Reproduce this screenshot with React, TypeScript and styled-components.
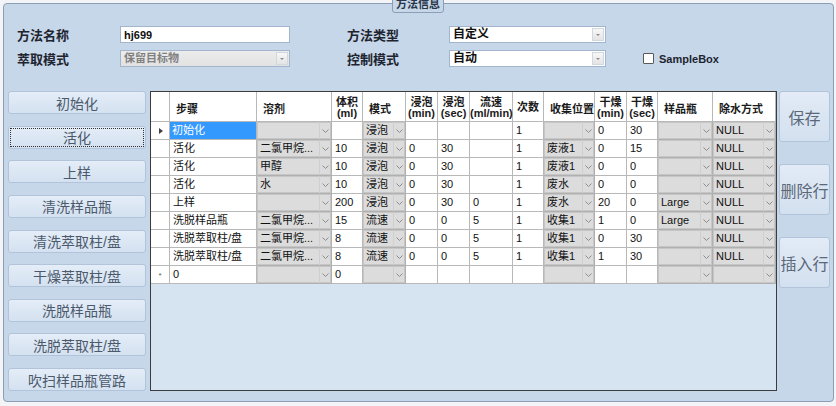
import React from 'react';
import styled, { createGlobalStyle } from 'styled-components';

const GlobalStyle = createGlobalStyle`
	body {
		margin: 0;
		background: #f2f4f7;
		font-family: 'Liberation Sans', 'Noto Sans CJK SC', sans-serif;
	}
`;

const FONT = `'Liberation Sans', 'Noto Sans CJK SC', sans-serif`;

const Page = styled.div`
	width: 836px;
	height: 406px;
	box-sizing: border-box;
	padding: 3px 2px 4px 3px;
	overflow: hidden;
`;

const Panel = styled.div`
	position: relative;
	height: 100%;
	box-sizing: border-box;
	border: 1px solid #8c9db4;
	border-radius: 4px;
	background: #c6d7e9;
	display: flex;
	flex-direction: column;
`;

const Legend = styled.div`
	position: absolute;
	top: -11px;
	left: 388px;
	width: 52px;
	height: 20px;
	box-sizing: border-box;
	border: 1px solid #8c9db4;
	border-radius: 3px;
	background: #c6d7e9;
	font: bold 11px ${FONT};
	color: #2a3548;
	text-align: center;
	line-height: 20px;
`;

const Form = styled.div`
	display: grid;
	grid-template-columns: 103px 170px 57px 102px 157px 37px auto;
	grid-template-rows: 17px 17px;
	row-gap: 7px;
	align-items: center;
	padding: 22px 0 0 13px;
`;

const Label = styled.div`
	font: bold 13px ${FONT};
	color: #1e2530;
`;

const TextInput = styled.input`
	width: 170px;
	height: 17px;
	box-sizing: border-box;
	border: 1px solid #a3b5cc;
	padding: 0 3px;
	font: bold 11px ${FONT};
	color: #101010;
	background: #fff;
	outline: none;
`;

const SelectBox = styled.div<{ $disabled?: boolean }>`
	display: flex;
	align-items: stretch;
	height: 17px;
	box-sizing: border-box;
	border: 1px solid #a3b5cc;
	background: ${(p) => (p.$disabled ? 'linear-gradient(#ececec, #e2e2e2)' : '#fff')};
	font: bold ${(p) => (p.$disabled ? '11px' : '12px')} ${FONT};
	color: ${(p) => (p.$disabled ? '#808080' : '#101010')};
`;

const SelectValue = styled.span`
	flex: 1;
	padding: 0 3px;
	line-height: 15px;
	white-space: nowrap;
`;

const DropBtn = styled.span`
	width: 10px;
	margin: 1px;
	border: 1px solid #d2d8e0;
	background: linear-gradient(#f7f7f7, #e4e4e4);
	display: flex;
	align-items: center;
	justify-content: center;
	&::after {
		content: '';
		border-left: 2px solid transparent;
		border-right: 2px solid transparent;
		border-top: 2px solid #8a8a8a;
	}
`;

const CheckRow = styled.label`
	display: flex;
	align-items: center;
	gap: 5px;
	font: bold 11px ${FONT};
	color: #1e2530;
`;

const CheckBox = styled.span`
	width: 11px;
	height: 11px;
	box-sizing: border-box;
	border: 1px solid #5a5a5a;
	border-radius: 1px;
	background: #fff;
`;

const Body = styled.div`
	display: flex;
	gap: 4px;
	margin-top: 24px;
	padding-left: 4px;
`;

const StepColumn = styled.div`
	width: 138px;
	height: 300px;
	display: flex;
	flex-direction: column;
	justify-content: space-between;
`;

const StepButton = styled.button<{ $focused?: boolean }>`
	height: 23px;
	box-sizing: border-box;
	border: 1px solid #b2c4d9;
	border-radius: 3px;
	background: linear-gradient(#e4edf8, #d4e1f0);
	font: 14px ${FONT};
	color: #4b596b;
	padding: 0;
	position: relative;
	&::after {
		content: '';
		display: ${(p) => (p.$focused ? 'block' : 'none')};
		position: absolute;
		inset: 1px;
		border: 1px dotted #303030;
	}
`;

const GridFrame = styled.div`
	width: 627px;
	height: 300px;
	box-sizing: border-box;
	border: 1px solid #3c3c3c;
	background: #d6e4f1;
	overflow: hidden;
`;

const Grid = styled.table`
	border-collapse: collapse;
	table-layout: fixed;
	width: 625px;
	font: 11px ${FONT};
	color: #111;
	margin: -1px 0 0 -1px;
`;

const HeadCell = styled.th<{ $center?: boolean }>`
	height: 30px;
	padding: ${(p) => (p.$center ? '2px 0 0 0' : '5px 0 0 6px')};
	box-sizing: border-box;
	background: #fff;
	border: 1px solid #b8b8b8;
	font: bold 11px ${FONT};
	line-height: 11px;
	text-align: ${(p) => (p.$center ? 'center' : 'left')};
	vertical-align: middle;
	color: #1a1a1a;
	white-space: pre-line;
`;

const RowHead = styled.td`
	height: 17px;
	padding: 0;
	background: #fff;
	border: 1px solid #b8b8b8;
	text-align: center;
	font-size: 9px;
	color: #505050;
`;

const Marker = styled.span<{ $kind: 'current' | 'new' }>`
	display: inline-block;
	${(p) =>
		p.$kind === 'current'
			? `width: 0; height: 0; border-top: 3px solid transparent; border-bottom: 3px solid transparent; border-left: 4px solid #404040; margin-left: 2px;`
			: `font-size: 8px; color: #606060;`}
`;

const Cell = styled.td<{ $selected?: boolean }>`
	height: 17px;
	padding: 0 0 0 ${(p) => (p.$selected ? '2px' : '3px')};
	border: 1px solid #b8b8b8;
	background: ${(p) => (p.$selected ? '#3399ff' : '#fff')};
	color: ${(p) => (p.$selected ? '#fff' : '#111')};
	white-space: nowrap;
	overflow: hidden;
	line-height: 17px;
`;

const ComboTd = styled.td`
	height: 17px;
	padding: 0;
	border: 1px solid #b0b0b0;
	background: #dcdcdc;
	box-shadow: inset 0 0 0 1px #c6c6c6;
`;

const ComboInner = styled.div`
	display: flex;
	height: 17px;
	align-items: stretch;
`;

const ComboText = styled.span`
	flex: 1;
	padding-left: 3px;
	line-height: 17px;
	white-space: nowrap;
	overflow: hidden;
`;

const ComboArrow = styled.span`
	width: 11px;
	border-left: 1px solid #cfcfcf;
	display: flex;
	align-items: center;
	justify-content: center;
`;

const ActionColumn = styled.div`
	width: 51px;
	margin-left: -2px;
	display: flex;
	flex-direction: column;
	gap: 22px;
`;

const ActionButton = styled.button`
	height: 51px;
	box-sizing: border-box;
	border: 1px solid #b2c4d9;
	border-radius: 3px;
	background: linear-gradient(#e2ebf6, #d3e0ef);
	font: 16px ${FONT};
	color: #5b687a;
	padding: 0;
`;

const Chevron = () => (
	<svg width="7" height="4" viewBox="0 0 7 4">
		<polyline points="0.5,0.5 3.5,3.5 6.5,0.5" fill="none" stroke="#8c8c8c" strokeWidth="1" />
	</svg>
);

const Combo = ({ value }: { value: string }) => (
	<ComboTd>
		<ComboInner>
			<ComboText>{value}</ComboText>
			<ComboArrow>
				<Chevron />
			</ComboArrow>
		</ComboInner>
	</ComboTd>
);

const columns: { title: string; width: number; center?: boolean }[] = [
	{ title: '', width: 19 },
	{ title: '步骤', width: 87 },
	{ title: '溶剂', width: 75 },
	{ title: '体积\n(ml)', width: 31, center: true },
	{ title: '模式', width: 43 },
	{ title: '浸泡\n(min)', width: 32, center: true },
	{ title: '浸泡\n(sec)', width: 32, center: true },
	{ title: '流速\n(ml/min)', width: 43, center: true },
	{ title: '次数', width: 31, center: true },
	{ title: '收集位置', width: 51 },
	{ title: '干燥\n(min)', width: 32, center: true },
	{ title: '干燥\n(sec)', width: 31, center: true },
	{ title: '样品瓶', width: 55 },
	{ title: '除水方式', width: 63 },
];

const COMBO_COLS = [2, 4, 9, 12, 13];

const rows: string[][] = [
	['>', '初始化', '', '', '浸泡', '', '', '', '1', '', '0', '30', '', 'NULL'],
	['', '活化', '二氯甲烷...', '10', '浸泡', '0', '30', '', '1', '废液1', '0', '15', '', 'NULL'],
	['', '活化', '甲醇', '10', '浸泡', '0', '30', '', '1', '废液1', '0', '0', '', 'NULL'],
	['', '活化', '水', '10', '浸泡', '0', '30', '', '1', '废水', '0', '0', '', 'NULL'],
	['', '上样', '', '200', '浸泡', '0', '30', '0', '1', '废水', '20', '0', 'Large', 'NULL'],
	['', '洗脱样品瓶', '二氯甲烷...', '15', '流速', '0', '0', '5', '1', '收集1', '1', '0', 'Large', 'NULL'],
	['', '洗脱萃取柱/盘', '二氯甲烷...', '8', '流速', '0', '0', '5', '1', '收集1', '0', '30', '', 'NULL'],
	['', '洗脱萃取柱/盘', '二氯甲烷...', '8', '流速', '0', '0', '5', '1', '收集1', '1', '30', '', 'NULL'],
	['*', '0', '', '0', '', '', '', '', '', '', '', '', '', ''],
];

const steps = ['初始化', '活化', '上样', '清洗样品瓶', '清洗萃取柱/盘', '干燥萃取柱/盘', '洗脱样品瓶', '洗脱萃取柱/盘', '吹扫样品瓶管路'];

export default function App() {
	return (
		<>
			<GlobalStyle />
			<Page>
				<Panel>
					<Legend>方法信息</Legend>
					<Form>
						<Label>方法名称</Label>
						<TextInput readOnly value="hj699" />
						<span />
						<Label>方法类型</Label>
						<SelectBox>
							<SelectValue>自定义</SelectValue>
							<DropBtn />
						</SelectBox>
						<span />
						<span />

						<Label>萃取模式</Label>
						<SelectBox $disabled>
							<SelectValue>保留目标物</SelectValue>
							<DropBtn />
						</SelectBox>
						<span />
						<Label>控制模式</Label>
						<SelectBox>
							<SelectValue>自动</SelectValue>
							<DropBtn />
						</SelectBox>
						<span />
						<CheckRow>
							<CheckBox />
							SampleBox
						</CheckRow>
					</Form>
					<Body>
						<StepColumn>
							{steps.map((s, i) => (
								<StepButton key={s + i} $focused={i === 1}>
									{s}
								</StepButton>
							))}
						</StepColumn>
						<GridFrame>
							<Grid>
								<colgroup>
									{columns.map((c, i) => (
										<col key={i} style={{ width: c.width }} />
									))}
								</colgroup>
								<thead>
									<tr>
										{columns.map((c, i) => (
											<HeadCell key={i} $center={c.center}>
												{c.title}
											</HeadCell>
										))}
									</tr>
								</thead>
								<tbody>
									{rows.map((r, ri) => (
										<tr key={ri}>
											{r.map((v, ci) => {
												if (ci === 0)
													return (
														<RowHead key={ci}>
															{v === '>' && <Marker $kind="current" />}
															{v === '*' && <Marker $kind="new">*</Marker>}
														</RowHead>
													);
												if (COMBO_COLS.includes(ci)) return <Combo key={ci} value={v} />;
												return (
													<Cell key={ci} $selected={ri === 0 && ci === 1}>
														{v}
													</Cell>
												);
											})}
										</tr>
									))}
								</tbody>
							</Grid>
						</GridFrame>
						<ActionColumn>
							<ActionButton>保存</ActionButton>
							<ActionButton>删除行</ActionButton>
							<ActionButton>插入行</ActionButton>
						</ActionColumn>
					</Body>
				</Panel>
			</Page>
		</>
	);
}
